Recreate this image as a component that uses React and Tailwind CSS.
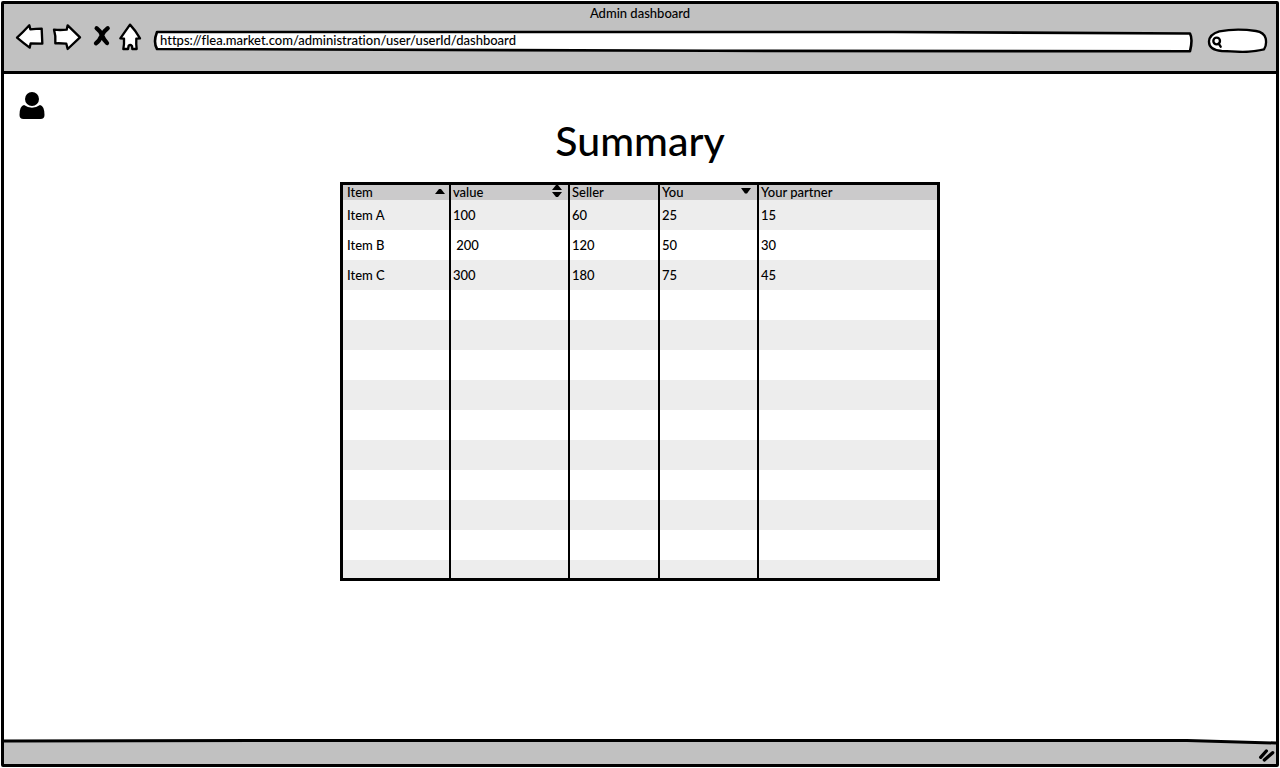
import React from 'react';

const columns = [
  { name: 'Item', sort: 'up', width: 'w-[108px]', gap: 'pl-1 pr-1' },
  { name: 'value', sort: 'both', width: 'w-[119px]', gap: 'pl-0.5 pr-1.5' },
  { name: 'Seller', sort: null, width: 'w-[90px]', gap: 'pl-0.5 pr-1.5' },
  { name: 'You', sort: 'down', width: 'w-[99px]', gap: 'pl-0.5 pr-1.5' },
  { name: 'Your partner', sort: null, width: '', gap: 'pl-0.5 pr-1.5' },
];

const rows = [
  ['Item A', '100', '60', '25', '15'],
  ['Item B', ' 200', '120', '50', '30'],
  ['Item C', '300', '180', '75', '45'],
  ...Array.from({ length: 9 }, () => ['', '', '', '', '']),
];

const sortPaths = {
  up: 'M0 9 L4 4 H6 L10 9 Z',
  down: 'M0 3 H10 L6 8.500 H4 Z',
  both: 'M0 5 L4 0 H6 L10 5 Z M0 7 H10 L6 12 H4 Z',
};

function NavButton({ label, width, viewBox, children }) {
  return (
    <button type="button" aria-label={label} className={`h-[30px] shrink-0 ${width}`}>
      <svg
        viewBox={viewBox}
        className="block size-full fill-white stroke-black stroke-[7]"
        strokeLinejoin="round"
        strokeLinecap="round"
      >
        {children}
      </svg>
    </button>
  );
}

function Toolbar() {
  return (
    <div className="flex gap-[7px] pl-[11px] pr-2">
      <NavButton label="Back" width="w-[30px]" viewBox="45 69 90 90">
        <path d="M51 113 Q68 98 88 76 L91 88 Q108 86 125 86 Q126 110 127 131 L92 130 L89 143 Q70 129 51 113 Z" />
      </NavButton>
      <NavButton label="Forward" width="w-[30px]" viewBox="156 69 90 90">
        <path d="M162 89 Q180 91 200 89 L203 76 L240 112 L203 147 L199 131 Q180 129 166 130 Q168 108 162 89 Z" />
      </NavButton>
      <NavButton label="Stop" width="w-[22px]" viewBox="267 69 66 90">
        <path
          d="M290 85 Q300 92 306 106 Q312 121 321 129 M323 85 Q313 92 305 107 Q298 123 288 130"
          className="fill-none stroke-[13]"
        />
      </NavButton>
      <NavButton label="Home" width="w-[28px]" viewBox="354 69 84 90">
        <path d="M390 74 Q376 94 361 115 L372 116 Q373 134 370 147 L384 147 L386 137 Q391 133 396 138 L397 147 L410 147 Q408 132 409 116 L420 115 Q406 91 390 74 Z" />
      </NavButton>
      <div className="relative mt-[7px] h-[23px] min-w-0 flex-1">
        <svg
          viewBox="0 0 1040 23"
          preserveAspectRatio="none"
          className="absolute inset-0 size-full fill-white stroke-black stroke-[2.6]"
          strokeLinejoin="round"
          aria-hidden="true"
        >
          <path
            vectorEffect="non-scaling-stroke"
            d="M4 2 L740 2 L1037 3.5 Q1040 9 1037 21.3 L560 20.8 L4 19 Q0 12 4 2 Z"
          />
        </svg>
        <input
          type="text"
          aria-label="Address"
          defaultValue="https://flea.market.com/administration/user/userId/dashboard"
          className="relative block h-5 w-full bg-transparent pl-[7px] pr-2 outline-none"
        />
      </div>
      <div className="relative h-[30px] w-[68px] shrink-0">
        <svg
          viewBox="420 69 204 90"
          className="absolute inset-0 size-full fill-white stroke-black stroke-[7]"
          strokeLinecap="round"
          strokeLinejoin="round"
          aria-hidden="true"
        >
          <path d="M447 124 Q448 103 478 94 Q530 84 588 93 Q612 97 617 115 Q621 135 612 148 Q585 155 548 156 Q515 154 485 153 Q446 150 447 124 Z" />
          <circle cx="470" cy="123" r="10" />
          <path d="M476 131 L482 140" />
        </svg>
        <input
          type="search"
          aria-label="Search"
          className="relative mt-[7px] block h-5 w-full bg-transparent pl-7 pr-2 outline-none"
        />
      </div>
    </div>
  );
}

function SummaryTable() {
  return (
    <div className="mx-auto mt-[19px] w-[600px] max-w-full border-[3px] border-black">
      <table className="w-full table-fixed border-separate border-spacing-0 text-left">
        <thead>
          <tr className="bg-[#cbcacb]">
            {columns.map((c) => (
              <th
                key={c.name}
                scope="col"
                className={`h-[15px] border-r-2 border-black p-0 font-medium last:border-r-0 ${c.width}`}
              >
                <div className={`flex h-[15px] items-start justify-between leading-[14px] ${c.gap}`}>
                  {c.name}
                  {c.sort && (
                    <button type="button" aria-label={`Sort by ${c.name}`}>
                      <svg viewBox="0 0 10 12" className="block h-3 w-2.5">
                        <path d={sortPaths[c.sort]} />
                      </svg>
                    </button>
                  )}
                </div>
              </th>
            ))}
          </tr>
        </thead>
        <tbody>
          {rows.map((row, i) => (
            <tr key={i} className="odd:bg-[#ededed]">
              {row.map((value, j) => (
                <td
                  key={j}
                  className={`h-[30px] whitespace-pre border-r-2 border-black py-0 last:border-r-0 ${columns[j].gap}`}
                >
                  {value}
                </td>
              ))}
            </tr>
          ))}
          <tr className="bg-[#ededed]">
            {columns.map((c) => (
              <td key={c.name} className="h-[18px] border-r-2 border-black p-0 last:border-r-0" />
            ))}
          </tr>
        </tbody>
      </table>
    </div>
  );
}

export default function App() {
  return (
    <div className="flex min-h-screen flex-col bg-white p-px font-['Lato',sans-serif] text-[13px] leading-5 font-medium text-black [font-variant-ligatures:none]">
      <div className="flex flex-1 flex-col rounded-[2px] border-[3px] border-black">
        <header className="border-b-[3px] border-black bg-[#c1c1c1] pb-[18px]">
          <p className="h-[19px] text-center leading-[18px]">Admin dashboard</p>
          <Toolbar />
        </header>

        <main className="flex-1 pt-[18px]">
          <button type="button" aria-label="Account" className="ml-[15px] block">
            <svg viewBox="0 0 26 27" className="block h-[27px] w-[26px]">
              <circle cx="13" cy="7" r="7" />
              <path d="M5 13 Q13 18.500 21 13 Q25.500 14 25.500 23 Q25.500 27 21.500 27 H4.500 Q0.500 27 0.500 23 Q0.500 14 5 13 Z" />
            </svg>
          </button>
          <h1 className="text-center text-[41px] leading-[44px]">Summary</h1>
          <SummaryTable />
        </main>

        <footer className="relative flex h-[25px] items-center justify-end bg-[#c1c1c1]">
          <svg
            viewBox="0 0 1272 6"
            preserveAspectRatio="none"
            className="absolute inset-x-0 top-0 h-1.5 w-full"
            aria-hidden="true"
          >
            <path d="M0 0 H1272 V4 L1183 1.500 H0 Z" className="fill-white" />
            <path
              d="M0 2 L300 1.500 H1183 L1272 4"
              vectorEffect="non-scaling-stroke"
              className="fill-none stroke-black stroke-[3]"
            />
          </svg>
          <svg viewBox="531 144 54 45" className="mt-[7px] h-[15px] w-[18px]" aria-hidden="true">
            <path
              d="M539 172 L556 153 M550 180 L575 158"
              className="fill-none stroke-black stroke-[10]"
              strokeLinecap="round"
            />
          </svg>
        </footer>
      </div>
    </div>
  );
}
